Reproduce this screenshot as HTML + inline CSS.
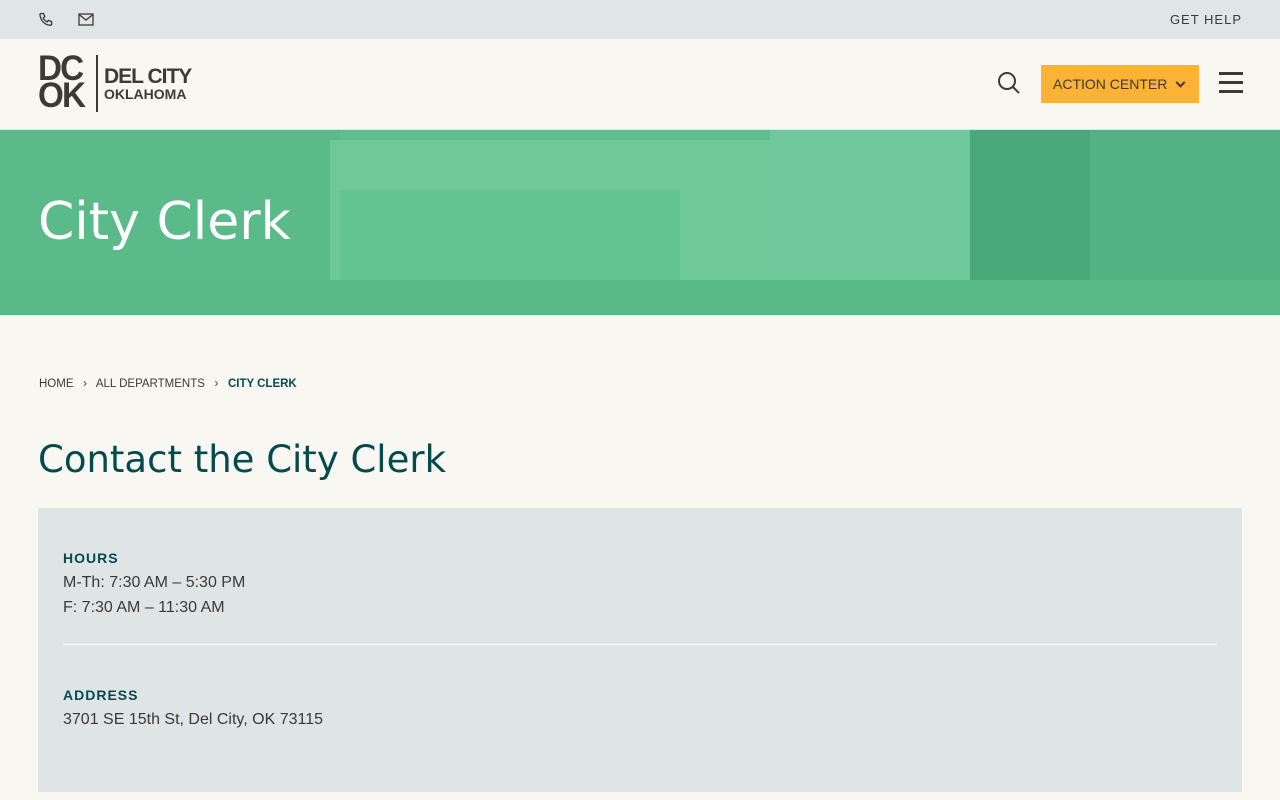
<!DOCTYPE html>
<html><head><meta charset="utf-8"><style>
*{margin:0;padding:0;box-sizing:border-box}
body{width:1280px;height:800px;overflow:hidden;background:#f8f7f2;font-family:"Liberation Sans",sans-serif;color:#3a3a36}
.top{height:39px;background:#e0e5e5;position:relative}
.top .gh{position:absolute;right:38px;top:12px;font-size:13px;letter-spacing:1px;color:#3a3a36}
.hdr{height:91px;position:relative;border-bottom:1px solid #e6e6e0}
.hero{height:185px;position:relative;overflow:hidden;background:#5dbf8e}
.bc{position:absolute;top:378px;left:39px;font-size:11.5px;color:#3a3a36}
.bc b{color:#054a4d}
h2{position:absolute;top:438px;left:38px;font-size:37px;font-weight:normal;color:#054a4d;font-family:"DejaVu Sans",sans-serif}
.box{position:absolute;left:38px;top:508px;width:1204px;height:284px;background:#dfe5e4}
.lab{position:absolute;left:25px;font-size:14px;font-weight:bold;letter-spacing:1px;color:#054a4d}
.txt{position:absolute;left:25px;font-size:16px;line-height:24.5px;color:#3a3a36}
</style></head><body>
<div class="top">
<svg style="position:absolute;left:38px;top:12px" width="16" height="16" viewBox="0 0 16 16" fill="none" stroke="#3a3a36" stroke-width="1.3"><path d="M3 1.5l2.5 0 1.3 3.2-1.6 1.2c.8 1.8 2.2 3.2 4 4l1.2-1.6 3.2 1.3v2.5c0 .6-.5 1.1-1.1 1.1C7 13.2 2.8 9 1.9 2.6 1.9 2 2.4 1.5 3 1.5z"/></svg>
<svg style="position:absolute;left:78px;top:13px" width="16" height="13" viewBox="0 0 16 13" fill="none" stroke="#3a3a36" stroke-width="1.3"><rect x="1" y="1" width="14" height="11"/><path d="M1 1.5l7 5.5 7-5.5"/></svg>
<div class="gh">GET HELP</div>
</div>
<div class="hdr">
<div style="position:absolute;left:38px;top:16px;font-weight:bold;font-size:35px;line-height:27px;color:#3a3a36;letter-spacing:-2px;transform:scaleX(0.95);transform-origin:left">DC<br>OK</div>
<div style="position:absolute;left:96px;top:16px;width:1.5px;height:57px;background:#3a3a36"></div>
<div style="position:absolute;left:104px;top:26px;font-weight:bold;font-size:21px;color:#3a3a36;letter-spacing:-1px">DEL CITY</div>
<div style="position:absolute;left:104px;top:47px;font-weight:bold;font-size:14px;color:#3a3a36">OKLAHOMA</div>
<svg style="position:absolute;left:997px;top:32px" width="24" height="24" viewBox="0 0 24 24" fill="none" stroke="#3a3a36" stroke-width="2"><circle cx="10" cy="10" r="8"/><path d="M16 16l6 6"/></svg>
<div style="position:absolute;left:1041px;top:26px;width:158px;height:38px;background:#fcb234;font-size:14px;color:#3a3a36;padding:11px 0 0 12px">ACTION CENTER <span style="display:inline-block;margin-left:6px;width:7px;height:7px;border-right:2.5px solid #3a3a36;border-bottom:2.5px solid #3a3a36;transform:rotate(45deg) translate(-2px,-2px)"></span></div>
<div style="position:absolute;left:1219px;top:33px;width:24px;height:2.5px;background:#3a3a36;box-shadow:0 9px 0 #3a3a36,0 18px 0 #3a3a36"></div>
</div>
<div class="hero">
<div style="position:absolute;left:0;top:0;width:340px;height:185px;background:#5aba89"></div>
<div style="position:absolute;left:330px;top:10px;width:440px;height:140px;background:#6ec89a"></div>
<div style="position:absolute;left:340px;top:60px;width:340px;height:90px;background:#64c393"></div>
<div style="position:absolute;left:770px;top:0;width:200px;height:185px;background:#6fc89c"></div>
<div style="position:absolute;left:970px;top:0;width:120px;height:185px;background:#4aa97a"></div>
<div style="position:absolute;left:1090px;top:0;width:190px;height:185px;background:#52b283"></div>
<div style="position:absolute;left:0;top:150px;width:1280px;height:35px;background:#58b888"></div>
<div style="position:absolute;left:38px;top:62px;font-size:52px;color:#fff;font-family:'DejaVu Sans',sans-serif">City Clerk</div>
</div>
<div class="bc">HOME &nbsp;&nbsp;›&nbsp;&nbsp; ALL DEPARTMENTS &nbsp;&nbsp;›&nbsp;&nbsp; <b>CITY CLERK</b></div>
<h2>Contact the City Clerk</h2>
<div class="box">
<div class="lab" style="top:42px">HOURS</div>
<div class="txt" style="top:63px">M-Th: 7:30 AM – 5:30 PM<br>F: 7:30 AM – 11:30 AM</div>
<div style="position:absolute;left:25px;right:25px;top:136px;height:1px;background:#fff"></div>
<div class="lab" style="top:179px">ADDRESS</div>
<div class="txt" style="top:200px">3701 SE 15th St, Del City, OK 73115</div>
</div>
</body></html>
